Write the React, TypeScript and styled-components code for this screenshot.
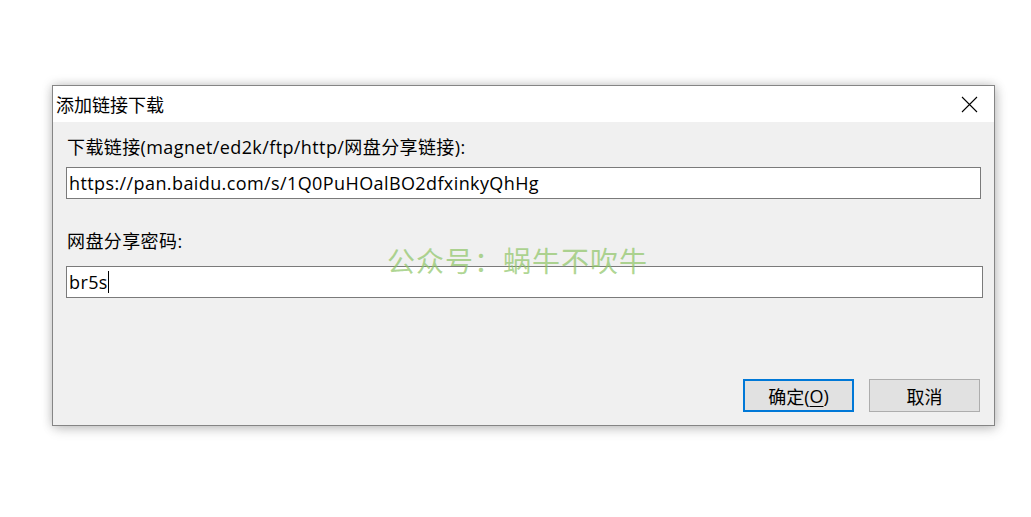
import styled, { createGlobalStyle } from 'styled-components';

const GlobalStyle = createGlobalStyle`
  html, body {
    margin: 0;
    padding: 0;
    background: #ffffff;
  }
  body {
    font-family: "Open Sans", "Noto Sans CJK SC", sans-serif;
  }
`;

const Page = styled.div`
  width: 1031px;
  height: 517px;
  padding: 85px 0 0 52px;
  box-sizing: border-box;
`;

const Dialog = styled.div`
  position: relative;
  width: 943px;
  height: 341px;
  box-sizing: border-box;
  border: 1px solid #858585;
  background: #f0f0f0;
  box-shadow: 0 0 10px rgba(0, 0, 0, 0.22), 2px 4px 12px rgba(0, 0, 0, 0.12);
  display: flex;
  flex-direction: column;
`;

const TitleBar = styled.div`
  height: 36px;
  background: #ffffff;
  display: flex;
  align-items: center;
  justify-content: space-between;
  padding: 0 16px 0 3px;
  flex-shrink: 0;
`;

const Title = styled.span`
  font-size: 18px;
  color: #000;
`;

const CloseIcon = styled.svg`
  width: 17px;
  height: 17px;
`;

const Body = styled.div`
  flex: 1;
  display: flex;
  flex-direction: column;
  padding: 13px 11px 13px 13px;
`;

const Label = styled.div<{ $top?: number }>`
  font-size: 18px;
  line-height: 24px;
  letter-spacing: 0.4px;
  color: #000;
  padding-left: 1px;
  margin-top: ${(p) => p.$top ?? 0}px;
`;

const Field = styled.div<{ $width: number; $top: number }>`
  width: ${(p) => p.$width}px;
  height: 32px;
  box-sizing: border-box;
  border: 1px solid #7a7a7a;
  background: #fff;
  margin-top: ${(p) => p.$top}px;
  display: flex;
  align-items: center;
  padding-left: 2px;
  font-size: 18px;
  letter-spacing: 0.4px;
  color: #000;
`;

const Caret = styled.span`
  display: inline-block;
  width: 1px;
  height: 22px;
  background: #000;
`;

const Buttons = styled.div`
  margin-top: auto;
  display: flex;
  justify-content: flex-end;
  gap: 15px;
  padding-right: 3px;
`;

const Button = styled.div<{ $primary?: boolean }>`
  width: 111px;
  height: 33px;
  box-sizing: border-box;
  border: ${(p) => (p.$primary ? '2px solid #0078d7' : '1px solid #adadad')};
  background: #e1e1e1;
  display: flex;
  align-items: center;
  justify-content: center;
  font-size: 18px;
  color: #000;

  u {
    text-decoration: underline;
    text-underline-offset: 3px;
  }
`;

const Watermark = styled.div`
  position: absolute;
  left: 334px;
  top: 154px;
  font-family: "Noto Sans CJK SC", sans-serif;
  font-size: 28px;
  color: rgba(140, 196, 100, 0.7);
  letter-spacing: 1px;
  pointer-events: none;
  white-space: nowrap;
`;

const App = () => (
  <>
    <GlobalStyle />
    <Page>
      <Dialog>
        <TitleBar>
          <Title>添加链接下载</Title>
          <CloseIcon viewBox="0 0 17 17">
            <path d="M1 1 L16 16 M16 1 L1 16" stroke="#000" strokeWidth="1.1" fill="none" />
          </CloseIcon>
        </TitleBar>
        <Body>
          <Label>下载链接(magnet/ed2k/ftp/http/网盘分享链接):</Label>
          <Field $width={915} $top={8}>
            https://pan.baidu.com/s/1Q0PuHOalBO2dfxinkyQhHg
          </Field>
          <Label $top={30}>网盘分享密码:</Label>
          <Field $width={917} $top={13}>
            br5s
            <Caret />
          </Field>
          <Buttons>
            <Button $primary>
              确定(<u>O</u>)
            </Button>
            <Button>取消</Button>
          </Buttons>
        </Body>
        <Watermark>公众号：蜗牛不吹牛</Watermark>
      </Dialog>
    </Page>
  </>
);

export default App;
